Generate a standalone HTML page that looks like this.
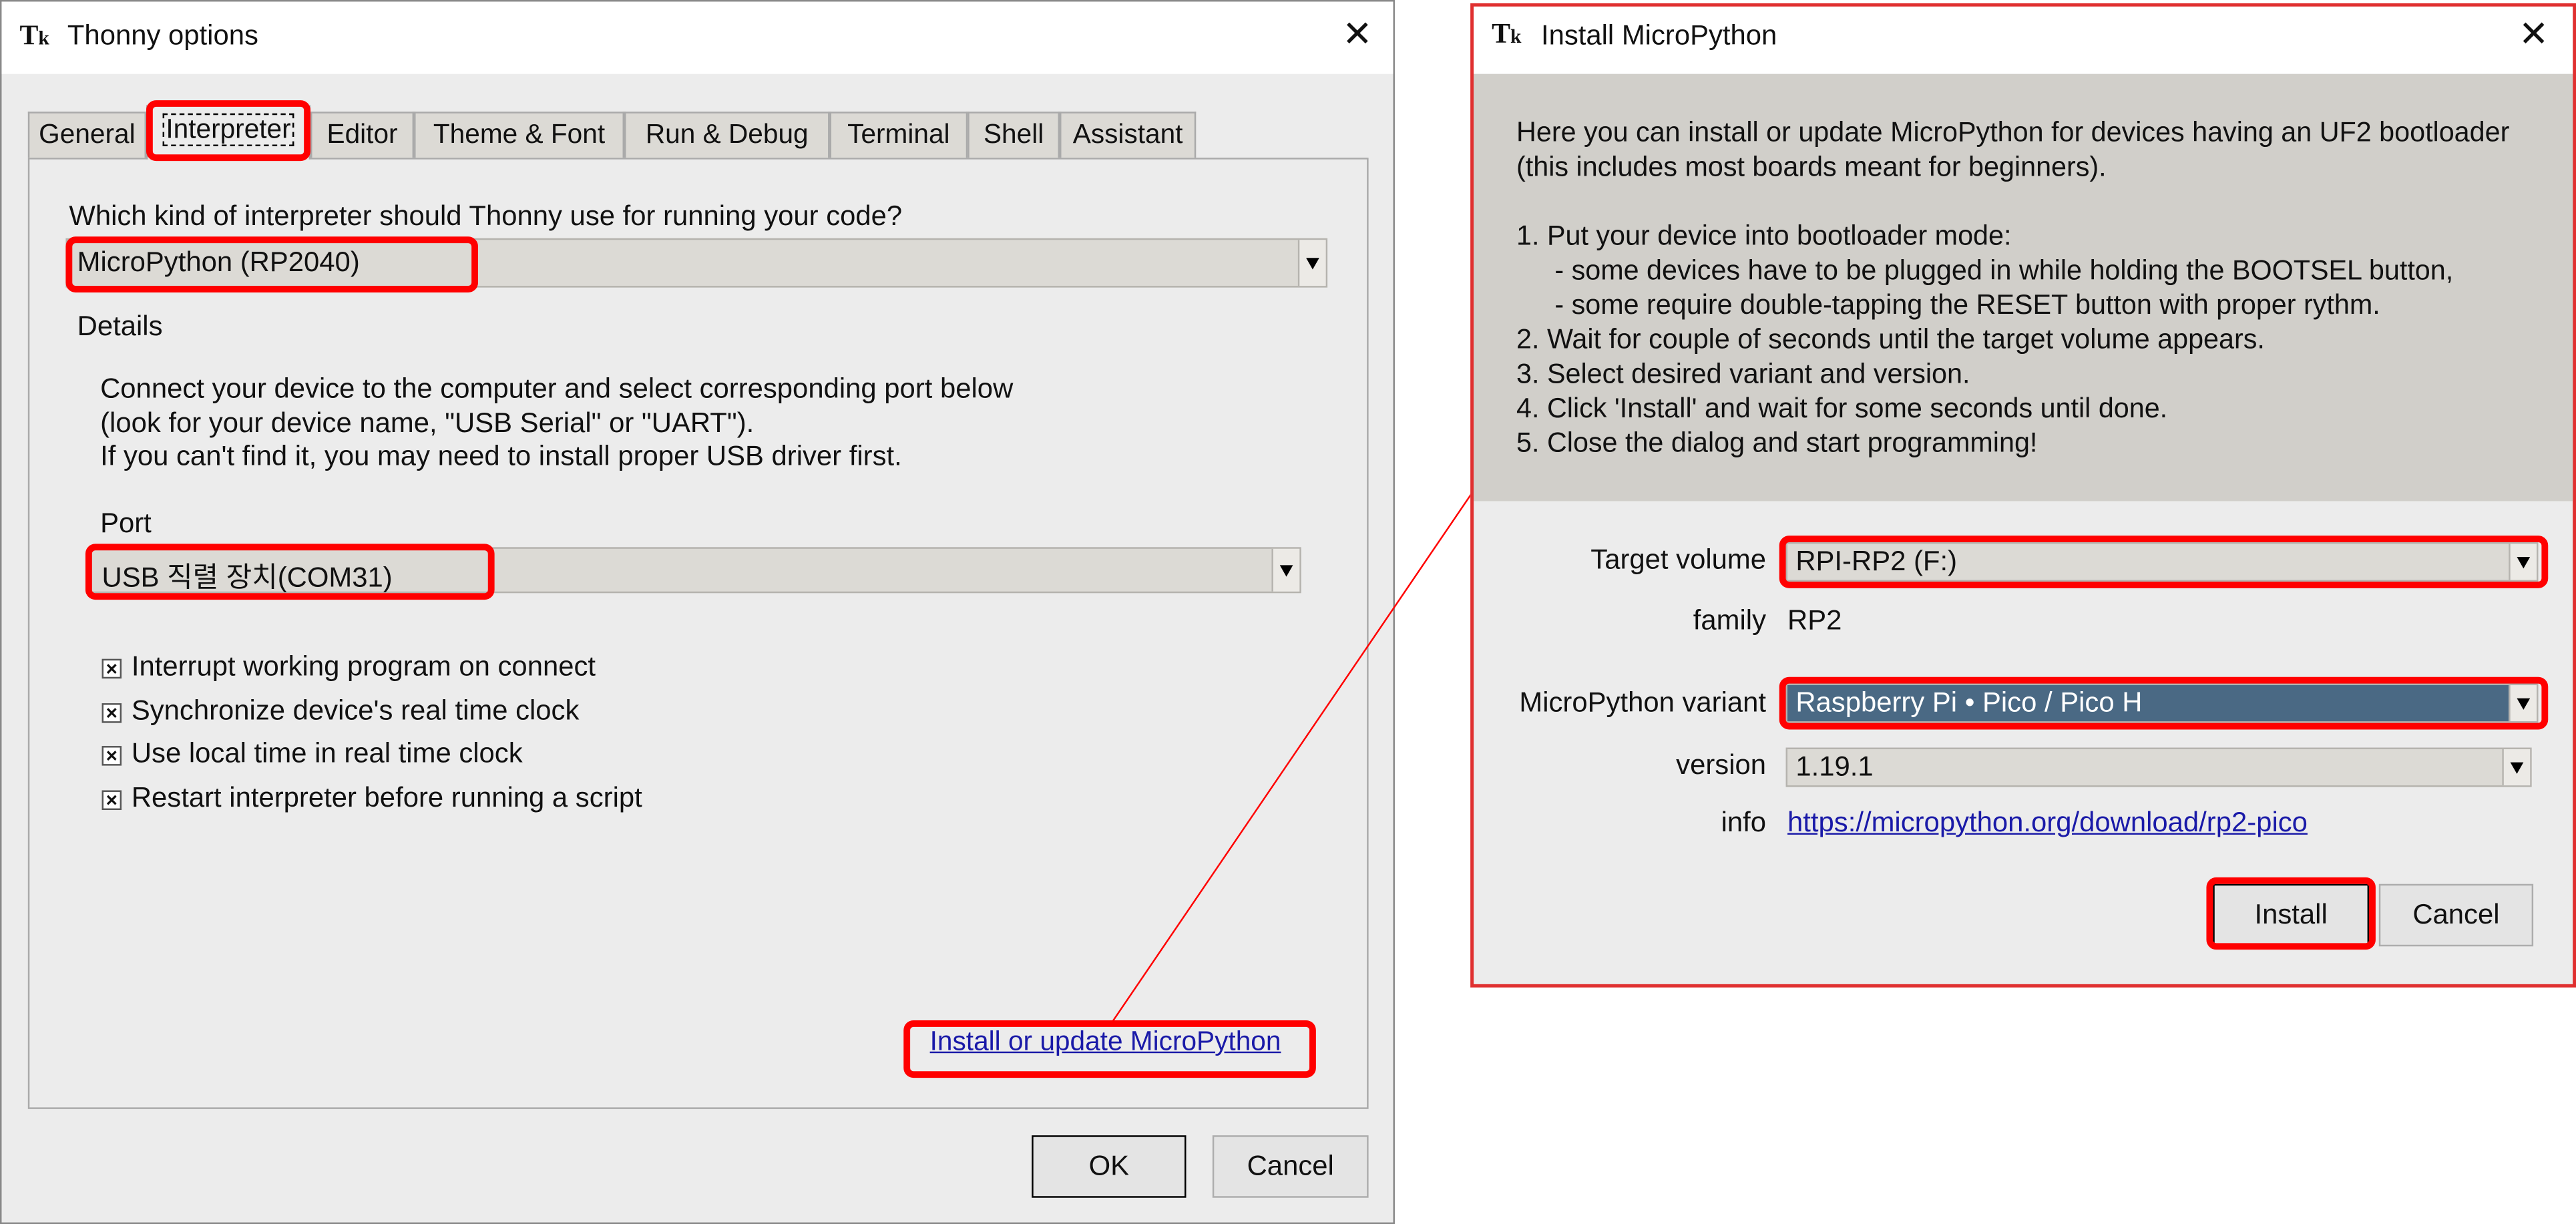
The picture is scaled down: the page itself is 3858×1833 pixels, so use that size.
<!DOCTYPE html>
<html><head><meta charset="utf-8"><style>
html,body{margin:0;padding:0;background:#fff;overflow:hidden;}
#s{width:1568px;height:745px;position:relative;transform:scale(2.4605);transform-origin:0 0;font-family:"Liberation Sans","Noto Sans CJK KR",sans-serif;font-size:17px;color:#111;}
.a{position:absolute;white-space:nowrap;}
.rb{position:absolute;border:4px solid #f00;border-radius:6px;box-sizing:border-box;}
.combo{position:absolute;background:#dcdad5;border:1px solid #b5b3ae;box-sizing:border-box;}
.arr{position:absolute;right:0;top:0;bottom:0;width:16px;border-left:1px solid #b5b3ae;background:#eceae6;}
.arr:after{content:"";position:absolute;left:4px;top:50%;margin-top:-3px;border-left:4px solid transparent;border-right:4px solid transparent;border-top:7px solid #000;}
.tab{position:absolute;top:68px;height:28px;background:#dcdad5;border:1px solid #aaa;border-bottom:none;box-sizing:border-box;text-align:center;line-height:27px;font-size:16.5px;}
.cb{position:absolute;width:12px;height:12px;border:1px solid #555;background:#fff;box-sizing:border-box;font-size:12px;line-height:10px;text-align:center;font-weight:bold;}
.btn{position:absolute;background:#e4e4e4;border:1px solid #adadad;box-sizing:border-box;text-align:center;}
</style></head><body><div id="s">
<div class="a" style="left:0;top:0;width:849px;height:745px;border:1px solid #888;box-sizing:border-box;background:#ececec;"></div>
<div class="a" style="left:1px;top:1px;width:847px;height:44px;background:#fff;"></div>
<div class="a" style="left:12px;top:12px;font-weight:bold;font-size:17px;font-family:'Liberation Serif',serif;">T<span style="font-size:12px">k</span></div>
<div class="a" style="left:41px;top:12px;font-size:17px;">Thonny options</div>
<div class="a" style="left:817px;top:8px;font-size:22px;font-weight:300;">✕</div>
<div class="a" style="left:17px;top:96px;width:816px;height:579px;border:1px solid #aaa;box-sizing:border-box;background:#ececec;"></div>
<div class="tab" style="left:17px;width:72px;">General</div>
<div class="tab" style="left:89px;width:100px;top:64px;height:33px;background:#ececec;line-height:28px;"><span style="border:1px dashed #000;padding:0 1px">Interpreter</span></div>
<div class="tab" style="left:189px;width:63px;">Editor</div>
<div class="tab" style="left:252px;width:128px;">Theme &amp; Font</div>
<div class="tab" style="left:380px;width:125px;">Run &amp; Debug</div>
<div class="tab" style="left:505px;width:84px;">Terminal</div>
<div class="tab" style="left:589px;width:56px;">Shell</div>
<div class="tab" style="left:645px;width:83px;">Assistant</div>
<div class="rb" style="left:89px;top:61px;width:100px;height:37px;"></div>
<div class="a" style="left:42px;top:122px;">Which kind of interpreter should Thonny use for running your code?</div>
<div class="combo" style="left:40px;top:145px;width:768px;height:30px;"><div class="arr"></div></div>
<div class="a" style="left:47px;top:150px;">MicroPython (RP2040)</div>
<div class="rb" style="left:40px;top:144px;width:251px;height:34px;"></div>
<div class="a" style="left:47px;top:189px;">Details</div>
<div class="a" style="left:61px;top:227px;line-height:20.5px;">Connect your device to the computer and select corresponding port below<br>(look for your device name, "USB Serial" or "UART").<br>If you can't find it, you may need to install proper USB driver first.</div>
<div class="a" style="left:61px;top:309px;">Port</div>
<div class="combo" style="left:55px;top:333px;width:737px;height:28px;"><div class="arr"></div></div>
<div class="a" style="left:62px;top:337px;">USB 직렬 장치(COM31)</div>
<div class="rb" style="left:52px;top:331px;width:249px;height:34px;"></div>
<div class="cb" style="left:62px;top:401px;">×</div><div class="a" style="left:80px;top:396px;">Interrupt working program on connect</div>
<div class="cb" style="left:62px;top:428px;">×</div><div class="a" style="left:80px;top:423px;">Synchronize device's real time clock</div>
<div class="cb" style="left:62px;top:454px;">×</div><div class="a" style="left:80px;top:449px;">Use local time in real time clock</div>
<div class="cb" style="left:62px;top:481px;">×</div><div class="a" style="left:80px;top:476px;">Restart interpreter before running a script</div>
<div class="a" style="left:566px;top:625px;color:#1a1aa8;text-decoration:underline;font-size:16.5px;">Install or update MicroPython</div>
<div class="rb" style="left:550px;top:621px;width:251px;height:35px;"></div>
<div class="btn" style="left:628px;top:691px;width:94px;height:38px;line-height:36px;border:1px solid #000;">OK</div>
<div class="btn" style="left:738px;top:691px;width:95px;height:38px;line-height:36px;">Cancel</div>
<svg class="a" style="left:0;top:0" width="1568" height="745"><line x1="677" y1="622" x2="896" y2="300" stroke="#f00" stroke-width="1"/></svg>
<div class="a" style="left:895px;top:2px;width:673px;height:599px;border:2px solid #e03030;box-sizing:border-box;background:#ececec;"></div>
<div class="a" style="left:897px;top:4px;width:669px;height:41px;background:#fff;"></div>
<div class="a" style="left:908px;top:11px;font-weight:bold;font-size:17px;font-family:'Liberation Serif',serif;">T<span style="font-size:12px">k</span></div>
<div class="a" style="left:938px;top:12px;font-size:17px;">Install MicroPython</div>
<div class="a" style="left:1533px;top:8px;font-size:22px;">✕</div>
<div class="a" style="left:897px;top:45px;width:669px;height:260px;background:#d1cfca;"></div>
<div class="a" style="left:923px;top:70px;line-height:21px;font-size:16.8px;">Here you can install or update MicroPython for devices having an UF2 bootloader<br>(this includes most boards meant for beginners).<br><br>1. Put your device into bootloader mode:<br>&nbsp;&nbsp;&nbsp;&nbsp;&nbsp;- some devices have to be plugged in while holding the BOOTSEL button,<br>&nbsp;&nbsp;&nbsp;&nbsp;&nbsp;- some require double-tapping the RESET button with proper rythm.<br>2. Wait for couple of seconds until the target volume appears.<br>3. Select desired variant and version.<br>4. Click 'Install' and wait for some seconds until done.<br>5. Close the dialog and start programming!</div>
<div class="a" style="left:900px;top:331px;width:175px;text-align:right;">Target volume</div>
<div class="combo" style="left:1087px;top:330px;width:458px;height:24px;"><div class="arr"></div></div>
<div class="a" style="left:1093px;top:332px;">RPI-RP2 (F:)</div>
<div class="rb" style="left:1083px;top:326px;width:468px;height:32px;"></div>
<div class="a" style="left:900px;top:368px;width:175px;text-align:right;">family</div>
<div class="a" style="left:1088px;top:368px;">RP2</div>
<div class="a" style="left:900px;top:418px;width:175px;text-align:right;">MicroPython variant</div>
<div class="combo" style="left:1087px;top:416px;width:458px;height:24px;background:#4a6984;"><div class="arr"></div></div>
<div class="a" style="left:1093px;top:418px;color:#fff;">Raspberry Pi • Pico / Pico H</div>
<div class="rb" style="left:1083px;top:412px;width:468px;height:32px;"></div>
<div class="a" style="left:900px;top:456px;width:175px;text-align:right;">version</div>
<div class="combo" style="left:1087px;top:455px;width:454px;height:24px;"><div class="arr"></div></div>
<div class="a" style="left:1093px;top:457px;">1.19.1</div>
<div class="a" style="left:900px;top:491px;width:175px;text-align:right;">info</div>
<div class="a" style="left:1088px;top:491px;color:#1a1aa8;text-decoration:underline;">https://micropython.org/download/rp2-pico</div>
<div class="btn" style="left:1347px;top:538px;width:95px;height:38px;line-height:36px;border:1px solid #000;">Install</div>
<div class="rb" style="left:1343px;top:534px;width:103px;height:44px;"></div>
<div class="btn" style="left:1448px;top:538px;width:94px;height:38px;line-height:36px;">Cancel</div>
</div></body></html>
